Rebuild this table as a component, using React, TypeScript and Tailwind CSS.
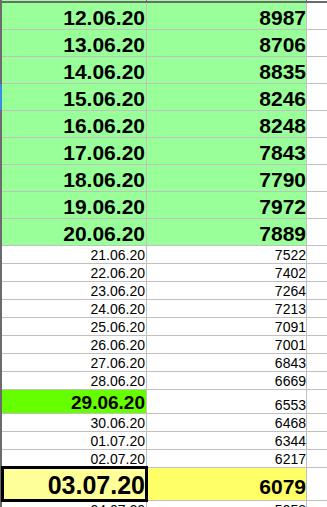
import type { ReactNode } from "react";

const BIG_ROWS = [
  ["12.06.20", "8987"],
  ["13.06.20", "8706"],
  ["14.06.20", "8835"],
  ["15.06.20", "8246"],
  ["16.06.20", "8248"],
  ["17.06.20", "7843"],
  ["18.06.20", "7790"],
  ["19.06.20", "7972"],
  ["20.06.20", "7889"],
];

const SMALL_ROWS = [
  ["21.06.20", "7522"],
  ["22.06.20", "7402"],
  ["23.06.20", "7264"],
  ["24.06.20", "7213"],
  ["25.06.20", "7091"],
  ["26.06.20", "7001"],
  ["27.06.20", "6843"],
  ["28.06.20", "6669"],
];

const LATE_ROWS = [
  ["30.06.20", "6468"],
  ["01.07.20", "6344"],
  ["02.07.20", "6217"],
];

function Row({
  height,
  a,
  b,
  edge = "bg-[#6b6b6b]",
}: {
  height: string;
  a: ReactNode;
  b: ReactNode;
  edge?: string;
}) {
  return (
    <div className="flex">
      <div className={`w-[2px] ${edge} border-b border-[#6b6b6b] ${height}`} />
      {a}
      {b}
      <div className={`flex-1 border-b border-[#c0c0c0] ${height}`} />
    </div>
  );
}

function Cell({
  text,
  width,
  height,
  bg = "bg-white",
  font,
  pad = "pb-[1px]",
  pr = "pr-0",
}: {
  text: string;
  width: string;
  height: string;
  bg?: string;
  font: string;
  pad?: string;
  pr?: string;
}) {
  return (
    <div
      className={`flex items-end justify-end ${width} ${height} ${bg} ${pad} ${pr} border-r border-b border-[#c0c0c0] text-black leading-none ${font}`}
    >
      {text}
    </div>
  );
}

export default function App() {
  return (
    <div className="h-[507px] w-full overflow-hidden bg-white font-['Liberation_Sans',Arial,sans-serif]">
      {/* leftover pixel of the row above and the header edge */}
      <div className="flex h-[1px]">
        <div className="w-[2px] bg-[#6b6b6b]" />
        <div className="w-[145px] border-r border-[#6b6b6b] bg-[#99ff99]" />
        <div className="w-[160px] border-r border-[#6b6b6b] bg-[#99ff99]" />
        <div className="flex-1" />
      </div>
      <div className="h-[2px] bg-[#6b6b6b]" />

      {BIG_ROWS.map(([d, n], i) => (
        <Row
          key={d}
          height="h-[27px]"
          edge={i === 3 ? "bg-[#3a8de4]" : "bg-[#6b6b6b]"}
          a={<Cell text={d} width="w-[145px]" height="h-[27px]" bg="bg-[#99ff99]" pr="pr-[1px]" font="text-[21px] font-bold" />}
          b={<Cell text={n} width="w-[160px]" height="h-[27px]" bg="bg-[#99ff99]" font="text-[21px] font-bold" />}
        />
      ))}

      {SMALL_ROWS.map(([d, n]) => (
        <Row
          key={d}
          height="h-[18px]"
          a={<Cell text={d} width="w-[145px]" height="h-[18px]" pr="pr-[1px]" font="text-[14px]" />}
          b={<Cell text={n} width="w-[160px]" height="h-[18px]" font="text-[14px]" />}
        />
      ))}

      <Row
        height="h-[24px]"
        a={<Cell text="29.06.20" width="w-[145px]" height="h-[24px]" bg="bg-[#66ff00]" pr="pr-[1px]" font="text-[19px] font-bold" />}
        b={<Cell text="6553" width="w-[160px]" height="h-[24px]" font="text-[14px]" />}
      />

      {LATE_ROWS.map(([d, n]) => (
        <Row
          key={d}
          height="h-[18px]"
          a={<Cell text={d} width="w-[145px]" height="h-[18px]" pr="pr-[1px]" font="text-[14px]" />}
          b={<Cell text={n} width="w-[160px]" height="h-[18px]" font="text-[14px]" />}
        />
      ))}

      <Row
        height="h-[33px]"
        a={
          <div className="relative h-[33px] w-[145px] border-r border-b border-[#c0c0c0]">
            <div className="absolute -left-[1px] -top-[2px] z-10 flex h-[36px] w-[147px] items-end justify-end border-[3px] border-black bg-[#ffff99] pb-[1px] pr-0 text-[25px] font-bold leading-none text-black">
              03.07.20
            </div>
          </div>
        }
        b={<Cell text="6079" width="w-[160px]" height="h-[33px]" bg="bg-[#ffff66]" pad="pb-[3px]" font="text-[21px] font-bold" />}
      />

      <Row
        height="h-[18px]"
        a={<Cell text="04.07.20" width="w-[145px]" height="h-[18px]" pr="pr-[1px]" font="text-[14px]" />}
        b={<Cell text="5958" width="w-[160px]" height="h-[18px]" font="text-[14px]" />}
      />
    </div>
  );
}
